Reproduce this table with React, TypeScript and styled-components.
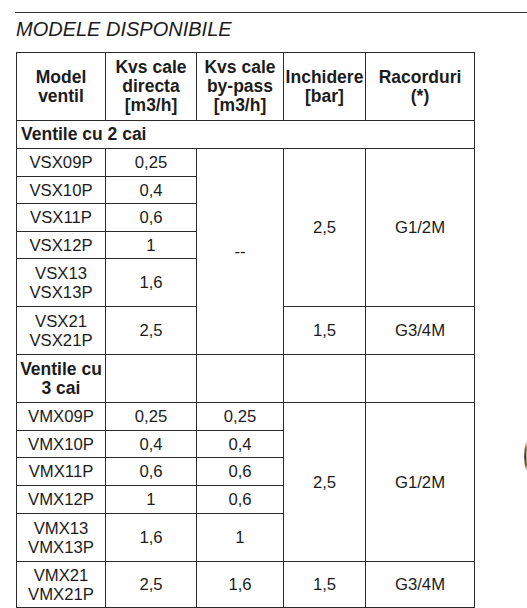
import React from "react";
import styled, { createGlobalStyle } from "styled-components";

const Global = createGlobalStyle`
  html, body {
    margin: 0;
    padding: 0;
    background: #ffffff;
    overflow: hidden;
  }
  body {
    font-family: "Liberation Sans", Arial, sans-serif;
    color: #1c1c1c;
  }
`;

const Page = styled.div`
  position: relative;
  width: 527px;
  height: 608px;
  padding-top: 12px;
  box-sizing: border-box;
`;

const Rule = styled.hr`
  margin: 0 0 0 15px;
  border: 0;
  border-top: 1px solid #333333;
  height: 0;
`;

const Title = styled.h2`
  margin: 5px 0 0 16px;
  font-size: 20px;
  line-height: 23px;
  font-style: italic;
  font-weight: 400;
  color: #1c1c1c;
`;

const Grid = styled.div`
  display: grid;
  margin: 11px 0 0 16px;
  width: 459px;
  box-sizing: border-box;
  padding: 1px;
  gap: 1px;
  background: #2b2b2b;
  grid-template-columns: 88px 90px 86px 81px 108px;
  grid-template-rows: 67px 27px 27px 26px 27px 26px 47px 47px 47px 27px 26px 27px 27px 47px 45px;
`;

type CellProps = {
  $row: string;
  $col: string;
  $bold?: boolean;
  $left?: boolean;
};

const Cell = styled.div<CellProps>`
  grid-row: ${(p) => p.$row};
  grid-column: ${(p) => p.$col};
  background: #ffffff;
  display: flex;
  align-items: center;
  justify-content: ${(p) => (p.$left ? "flex-start" : "center")};
  text-align: ${(p) => (p.$left ? "left" : "center")};
  padding: 0 ${(p) => (p.$left ? "4px" : "0")};
  font-size: ${(p) => (p.$bold ? "17.5px" : "16.7px")};
  font-weight: ${(p) => (p.$bold ? 700 : 400)};
  line-height: 19px;
  white-space: nowrap;
  overflow: hidden;
`;

const Photo = styled.svg`
  position: absolute;
  right: 0;
  top: 440px;
  width: 5px;
  height: 32px;
`;

type Row = { model: string[]; direct: string; bypass?: string };

const twoWay: Row[] = [
  { model: ["VSX09P"], direct: "0,25" },
  { model: ["VSX10P"], direct: "0,4" },
  { model: ["VSX11P"], direct: "0,6" },
  { model: ["VSX12P"], direct: "1" },
  { model: ["VSX13", "VSX13P"], direct: "1,6" },
  { model: ["VSX21", "VSX21P"], direct: "2,5" },
];

const threeWay: Row[] = [
  { model: ["VMX09P"], direct: "0,25", bypass: "0,25" },
  { model: ["VMX10P"], direct: "0,4", bypass: "0,4" },
  { model: ["VMX11P"], direct: "0,6", bypass: "0,6" },
  { model: ["VMX12P"], direct: "1", bypass: "0,6" },
  { model: ["VMX13", "VMX13P"], direct: "1,6", bypass: "1" },
  { model: ["VMX21", "VMX21P"], direct: "2,5", bypass: "1,6" },
];

const Lines = ({ items }: { items: string[] }) => (
  <span>
    {items.map((t, i) => (
      <React.Fragment key={i}>
        {i > 0 && <br />}
        {t}
      </React.Fragment>
    ))}
  </span>
);

export default function App() {
  const headers = [
    ["Model", "ventil"],
    ["Kvs cale", "directa", "[m3/h]"],
    ["Kvs cale", "by-pass", "[m3/h]"],
    ["Inchidere", "[bar]"],
    ["Racorduri", "(*)"],
  ];
  return (
    <Page>
      <Global />
      <Rule />
      <Title>MODELE DISPONIBILE</Title>
      <Grid>
        {headers.map((h, i) => (
          <Cell key={"h" + i} $row="1" $col={String(i + 1)} $bold>
            <Lines items={h} />
          </Cell>
        ))}
        <Cell $row="2" $col="1 / 6" $bold $left>
          Ventile cu 2 cai
        </Cell>
        {twoWay.map((r, i) => (
          <React.Fragment key={"s" + i}>
            <Cell $row={String(i + 3)} $col="1">
              <Lines items={r.model} />
            </Cell>
            <Cell $row={String(i + 3)} $col="2">
              {r.direct}
            </Cell>
          </React.Fragment>
        ))}
        <Cell $row="3 / span 6" $col="3">
          --
        </Cell>
        <Cell $row="3 / span 5" $col="4">
          2,5
        </Cell>
        <Cell $row="3 / span 5" $col="5">
          G1/2M
        </Cell>
        <Cell $row="8" $col="4">
          1,5
        </Cell>
        <Cell $row="8" $col="5">
          G3/4M
        </Cell>

        <Cell $row="9" $col="1" $bold>
          <Lines items={["Ventile cu", "3 cai"]} />
        </Cell>
        <Cell $row="9" $col="2" />
        <Cell $row="9" $col="3" />
        <Cell $row="9" $col="4" />
        <Cell $row="9" $col="5" />

        {threeWay.map((r, i) => (
          <React.Fragment key={"m" + i}>
            <Cell $row={String(i + 10)} $col="1">
              <Lines items={r.model} />
            </Cell>
            <Cell $row={String(i + 10)} $col="2">
              {r.direct}
            </Cell>
            <Cell $row={String(i + 10)} $col="3">
              {r.bypass}
            </Cell>
          </React.Fragment>
        ))}
        <Cell $row="10 / span 5" $col="4">
          2,5
        </Cell>
        <Cell $row="10 / span 5" $col="5">
          G1/2M
        </Cell>
        <Cell $row="15" $col="4">
          1,5
        </Cell>
        <Cell $row="15" $col="5">
          G3/4M
        </Cell>
      </Grid>
      <Photo viewBox="0 0 5 32" aria-hidden="true">
        <defs>
          <linearGradient id="arc" x1="0" y1="0" x2="0" y2="1">
            <stop offset="0" stopColor="#ffffff" />
            <stop offset="0.3" stopColor="#6b5428" />
            <stop offset="0.55" stopColor="#3e2f14" />
            <stop offset="0.8" stopColor="#7a6232" />
            <stop offset="1" stopColor="#ffffff" />
          </linearGradient>
        </defs>
        <path d="M5 1 Q1.5 16 5 31" stroke="url(#arc)" strokeWidth="2.2" fill="none" />
      </Photo>
    </Page>
  );
}
